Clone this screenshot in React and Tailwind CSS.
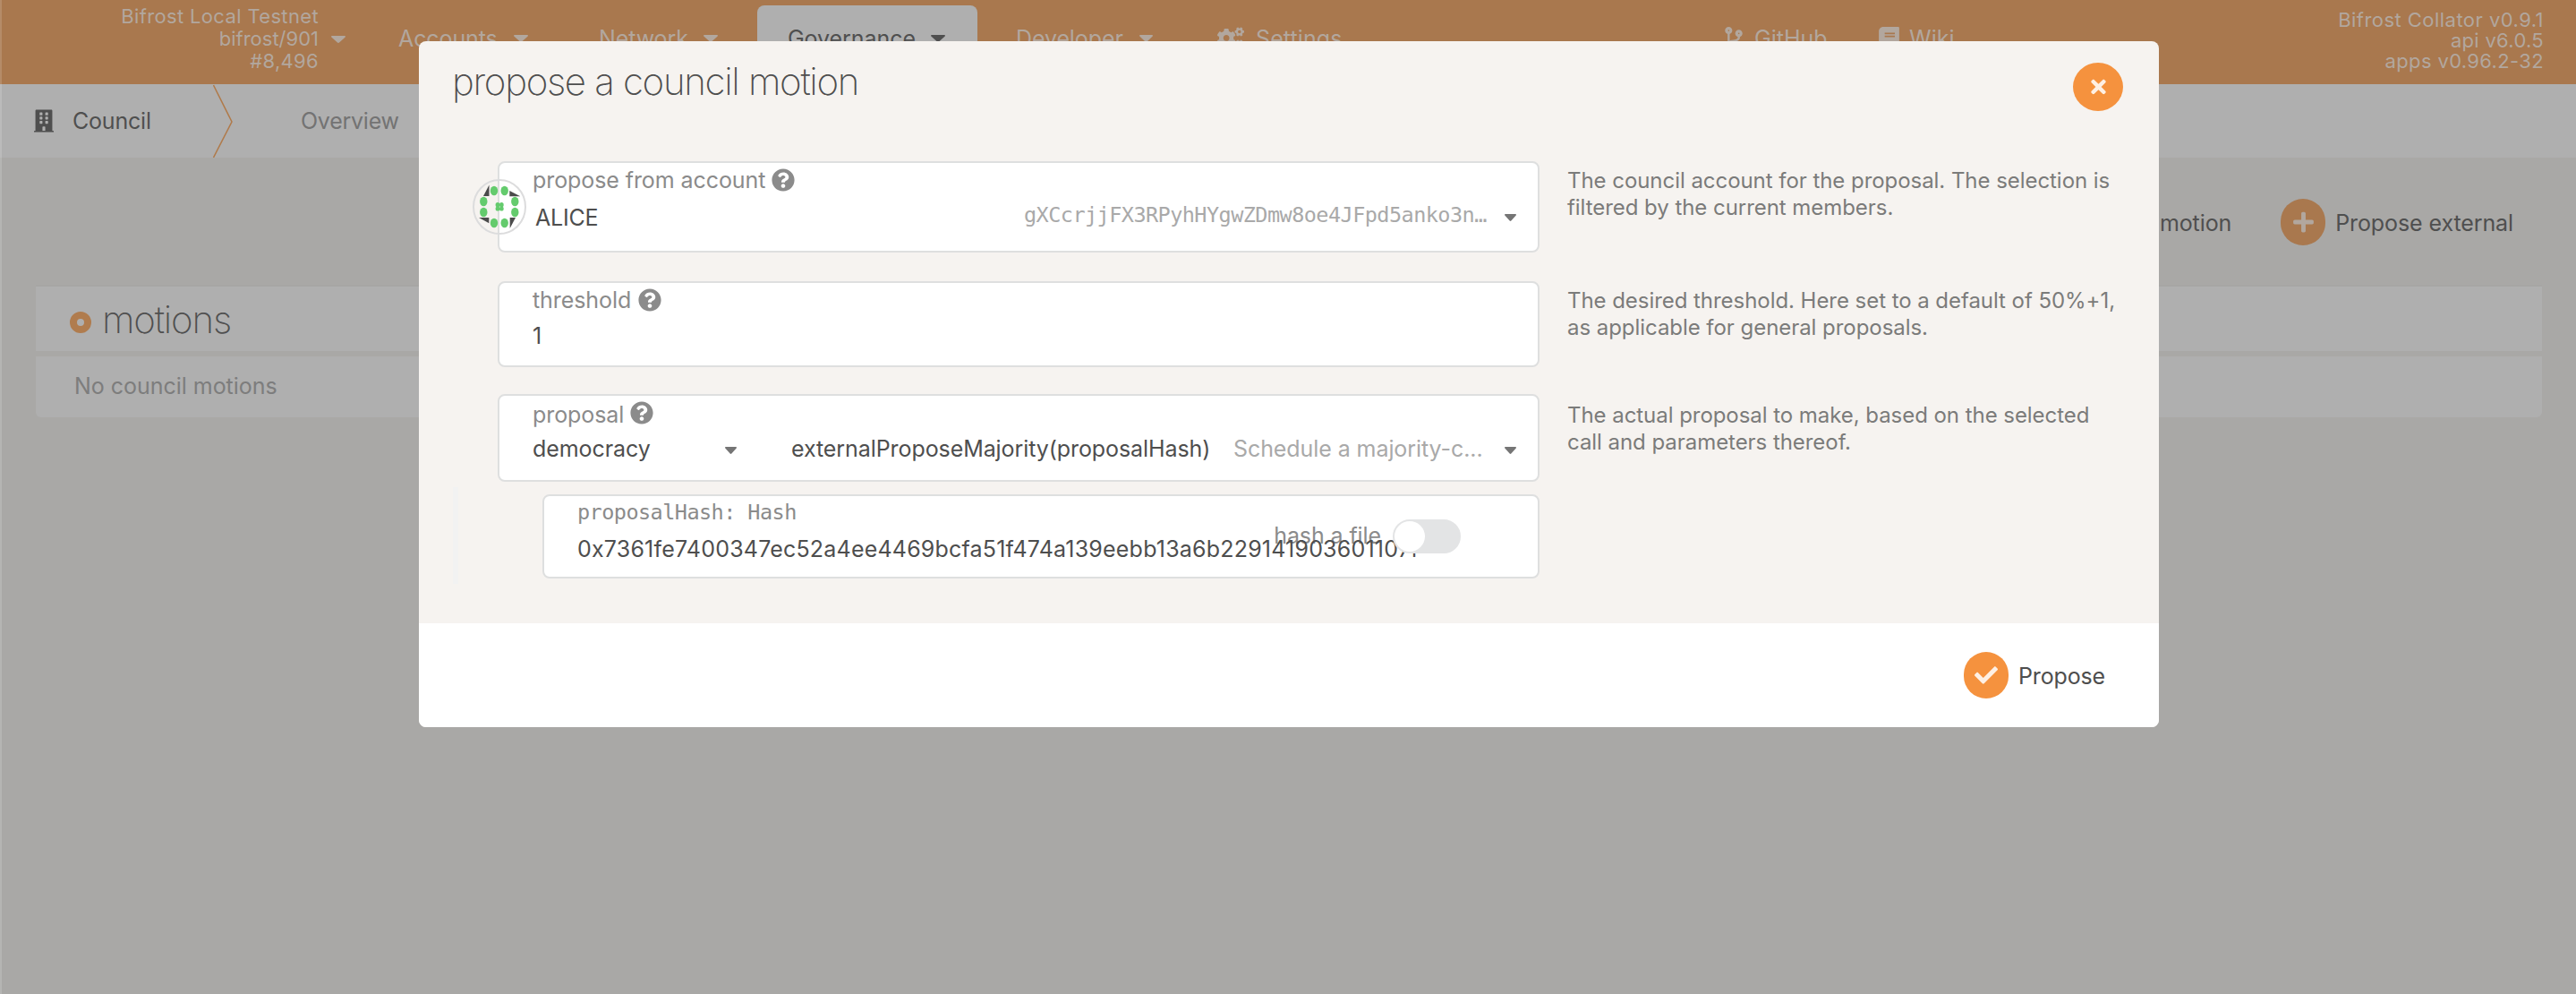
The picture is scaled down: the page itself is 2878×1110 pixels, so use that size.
import React from 'react';
import {
  FaBuilding,
  FaCogs,
  FaCodeBranch,
  FaBook,
  FaQuestionCircle,
  FaTimes,
  FaCheck,
  FaPlus,
} from 'react-icons/fa';

function Caret({ className = '' }) {
  return (
    <svg viewBox="0 0 16 9" preserveAspectRatio="none" className={`block shrink-0 ${className}`} fill="currentColor">
      <path d="M1 0h14c.9 0 1.3 1 .7 1.600L9 8.500c-.6.6-1.400.6-2 0L.3 1.600C-.3 1 .1 0 1 0z" />
    </svg>
  );
}

function Identicon() {
  const dots = [
    [24, 13], [35.7, 13], [12.3, 25], [12.3, 37],
    [47.3, 25], [47.3, 37], [24, 49], [35.7, 49],
  ];
  const core = [[28, 28.7], [32.3, 28.7], [28, 33], [32.3, 33]];
  return (
    <svg viewBox="0 0 60 62" className="absolute -left-[30px] top-[18px] h-[62px] w-[60px]">
      <ellipse cx="30" cy="31" rx="29" ry="30" fill="none" stroke="#dcdcdd" strokeWidth="2" />
      <g fill="#4b4b4b">
        <path d="M18.5 6.500v12.500H12z" />
        <path d="M41.300 13v6.200h12z" />
        <path d="M7 43h11.300v6.200z" />
        <path d="M41.700 43h6.300l-6.300 12z" />
      </g>
      <g fill="#64cb6d">
        {dots.map(([x, y]) => (
          <ellipse key={`${x}-${y}`} cx={x} cy={y} rx="4.200" ry="5.300" />
        ))}
        {core.map(([x, y]) => (
          <ellipse key={`${x}-${y}`} cx={x} cy={y} rx="2.400" ry="2.600" />
        ))}
      </g>
    </svg>
  );
}

function Header() {
  return (
    <header className="flex h-[94px] shrink-0 items-start bg-[#a9784e] text-[25px] leading-[86px] text-[#b2a79e]">
      <div className="w-[356px] pt-[6px] text-right text-[22px] leading-[25px]">
        <div className="tracking-[0.35px]">Bifrost Local Testnet</div>
        <div>bifrost/901</div>
        <div className="tracking-[0.3px]">#8,496</div>
      </div>
      <Caret className="ml-[14px] mt-[40px] h-[8px] w-[16px]" />
      <div className="ml-[59px] w-[109px] tracking-[-0.1px]">Accounts</div>
      <Caret className="ml-[20px] mt-[39px] h-[8px] w-[16px]" />
      <div className="ml-[79px] w-[98px] tracking-[-0.1px]">Network</div>
      <Caret className="ml-[19px] mt-[39px] h-[8px] w-[16px]" />
      <div className="ml-[44px] mt-[6px] flex h-[88px] w-[246px] rounded-t-lg bg-[#afafaf] pl-[34px] text-[#4f4f4f]">
        <div className="w-[142px] leading-[74px] tracking-[-0.05px]">Governance</div>
        <Caret className="ml-[18px] mt-[33px] h-[8px] w-[16px]" />
      </div>
      <div className="ml-[43px] w-[118px] tracking-[-0.1px]">Developer</div>
      <Caret className="ml-[20px] mt-[39px] h-[8px] w-[15px]" />
      <FaCogs className="ml-[72px] mt-[30px] h-[25px] w-[30px]" />
      <div className="ml-[13px] w-[97px] tracking-[0.1px]">Settings</div>
      <FaCodeBranch className="ml-[427px] mt-[30px] h-[26px] w-[20px]" />
      <div className="ml-[13px] w-[81px]">GitHub</div>
      <FaBook className="ml-[58px] mt-[30px] h-[26px] w-[23px]" />
      <div className="ml-[11px] w-[49px]">Wiki</div>
      <div className="ml-auto mr-[36px] pt-[11px] text-right text-[22px] leading-[23px]">
        <div className="tracking-[0.46px]">Bifrost Collator v0.9.1</div>
        <div className="tracking-[0.3px]">api v6.0.5</div>
        <div className="tracking-[0.35px]">apps v0.96.2-32</div>
      </div>
    </header>
  );
}

function TabBar() {
  return (
    <nav className="flex h-[82px] shrink-0 items-center bg-[#afafaf] pl-[38px] text-[25px] leading-[30px]">
      <FaBuilding className="h-[26px] w-[22px] text-[#4f4f4f]" />
      <div className="ml-[21px] w-[87px] tracking-[-0.2px] text-[#4f4f4f]">Council</div>
      <svg viewBox="0 0 22 82" className="ml-[70px] h-[82px] w-[22px]" fill="none" stroke="#b07a4a" strokeWidth="1.500">
        <path d="M.5 1L21 42 .5 82" />
      </svg>
      <div className="ml-[76px] tracking-[-0.25px] text-[#737373]">Overview</div>
    </nav>
  );
}

function Page() {
  return (
    <div className="flex h-[1110px] flex-col">
      <Header />
      <TabBar />
      <div className="mt-[46px] flex h-[52px] items-center justify-end pr-[70px] text-[25px] leading-[30px] text-[#4f4f4f]">
        <span className="mt-[2px] tracking-[-0.1px]">Propose motion</span>
        <span className="ml-[55px] flex h-[52px] w-[50px] items-center justify-center rounded-[25px] bg-[#a9784e] text-[#b2a79e]">
          <FaPlus className="h-[26px] w-[25px]" />
        </span>
        <span className="ml-[11px] mt-[2px] tracking-[-0.1px]">Propose external</span>
      </div>
      <div className="ml-[40px] mt-[44px] flex h-[74px] w-[2800px] shrink-0 items-center border-t-2 border-[#a7a6a4] bg-[#afafaf] pl-[38px]">
        <svg viewBox="0 0 24 26" className="mt-[8px] h-[26px] w-[24px]" fill="none">
          <circle cx="12" cy="13" r="8" stroke="#b07c4e" strokeWidth="8" />
        </svg>
        <span className="ml-[12px] mt-[1px] text-[42px] font-extralight leading-[52px] tracking-[-1.2px] text-[#4f4f4f]">motions</span>
      </div>
      <div className="ml-[40px] mt-[6px] flex h-[68px] w-[2800px] shrink-0 items-center rounded-b-md bg-[#afafaf] pb-[2px] pl-[43px] text-[25px] leading-[30px] tracking-[-0.03px] text-[#7d7d7d]">
        No council motions
      </div>
    </div>
  );
}

function Field({ className, children, hint, hintClass = 'pt-[7px]' }) {
  return (
    <div className="flex pl-[88px]">
      <div className={`relative w-[1164px] shrink-0 rounded-lg border-2 border-[#dedfdf] bg-white pl-[37px] ${className}`}>
        {children}
      </div>
      {hint && (
        <p className={`ml-[31px] whitespace-pre text-[24px] leading-[30px] tracking-[-0.05px] text-[#7b7b7a] ${hintClass}`}>{hint}</p>
      )}
    </div>
  );
}

function Label({ children, width, iconClass = '' }) {
  return (
    <div className="flex h-[30px] items-center text-[#8b8b8b]">
      <span className={`tracking-[-0.08px] ${width}`}>{children}</span>
      <FaQuestionCircle className={`h-[26px] w-[26px] ${iconClass}`} />
    </div>
  );
}

function Modal() {
  return (
    <section className="absolute left-[468px] top-[46px] flex h-[766px] w-[1944px] flex-col overflow-hidden rounded-lg bg-[#f6f3f0] text-[25px] leading-[30px] text-[#4e4e4e]">
      <div className="flex h-[134px] shrink-0 justify-between pl-[37px] pr-[40px]">
        <h1 className="pt-[19px] text-[42px] font-extralight leading-[52px] tracking-[-1.32px]">propose a council motion</h1>
        <button className="mt-[24px] flex h-[54px] w-[56px] items-center justify-center rounded-[50%] bg-[#f5923e] text-[#fef0e4]">
          <FaTimes className="h-[24px] w-[19px]" />
        </button>
      </div>

      <Field
        className="h-[102px] pt-[4px]"
        hint={'The council account for the proposal. The selection is\nfiltered by the current members.'}
      >
        <Identicon />
        <Label width="w-[267px]">propose from account</Label>
        <div className="mt-[12px] flex h-[30px] pl-[3px] tracking-[-0.2px]">
          <span className="w-[546px]">ALICE</span>
          <span className="-mt-[3px] w-[537px] font-['DejaVu_Sans_Mono','Liberation_Mono',monospace] text-[23.500px] tracking-[-0.550px] text-[#a9a9a9]">
            gXCcrjjFX3RPyhHYgwZDmw8oe4JFpd5anko3n…
          </span>
          <Caret className="mt-[11px] h-[8px] w-[13px] text-[#757575]" />
        </div>
      </Field>

      <div className="h-[32px] shrink-0" />
      <Field
        className="h-[96px] pt-[4px]"
        hint={'The desired threshold. Here set to a default of 50%+1,\nas applicable for general proposals.'}
      >
        <Label width="w-[118px]">threshold</Label>
        <div className="mt-[10px]">1</div>
      </Field>

      <div className="h-[30px] shrink-0" />
      <Field
        className="h-[98px] pt-[6px]"
        hint={'The actual proposal to make, based on the selected\ncall and parameters thereof.'}
        hintClass="pt-[9px]"
      >
        <Label width="w-[109px]" iconClass="-mt-[4px]">proposal</Label>
        <div className="mt-[8px] flex h-[30px] tracking-[-0.08px]">
          <span className="w-[215px]">democracy</span>
          <Caret className="mt-[13px] h-[8px] w-[13px] text-[#757575]" />
          <span className="ml-[61px] w-[494px]">externalProposeMajority(proposalHash)</span>
          <span className="w-[303px] text-[#a9a9a9]">Schedule a majority-c...</span>
          <Caret className="mt-[13px] h-[8px] w-[13px] text-[#757575]" />
        </div>
      </Field>

      <div className="mt-[6px] flex h-[108px] shrink-0 pl-[38px]">
        <div className="h-[108px] w-[6px] bg-[#f2f2f2]" />
        <div className="relative ml-[94px] mt-[8px] h-[94px] w-[1114px] rounded-lg border-2 border-[#dedfdf] bg-white pl-[37px] pt-[3px]">
          <div className="font-['DejaVu_Sans_Mono','Liberation_Mono',monospace] text-[23.500px] tracking-[-0.550px] text-[#8b8b8b]">
            proposalHash: Hash
          </div>
          <span className="absolute right-[175px] top-[29px] tracking-[-0.1px] text-[#8b8b8b]">hash a file</span>
          <div className="relative mt-[11px] tracking-[0.200px]">
            0x7361fe7400347ec52a4ee4469bcfa51f474a139eebb13a6b229141903601107f
          </div>
          <div className="absolute right-[86px] top-[26px] h-[38px] w-[76px] rounded-full border-2 border-[#e3e4e5] bg-[#e3e4e5]">
            <div className="h-[34px] w-[34px] rounded-full bg-white" />
          </div>
        </div>
      </div>

      <footer className="mt-auto flex h-[116px] shrink-0 items-center justify-end bg-white pr-[60px]">
        <span className="flex h-[52px] w-[50px] items-center justify-center rounded-[25px] bg-[#f5923e] text-[#fef0e4]">
          <FaCheck className="h-[26px] w-[26px]" />
        </span>
        <span className="ml-[11px] mt-[2px] w-[97px] tracking-[-0.15px]">Propose</span>
      </footer>
    </section>
  );
}

export default function App() {
  return (
    <main className="relative h-[1110px] w-[2878px] overflow-hidden whitespace-nowrap bg-[#a9a8a6] font-['Inter','Liberation_Sans',sans-serif]">
      <Page />
      <div className="absolute left-0 top-0 h-[1110px] w-[2px] bg-white/15" />
      <Modal />
    </main>
  );
}
